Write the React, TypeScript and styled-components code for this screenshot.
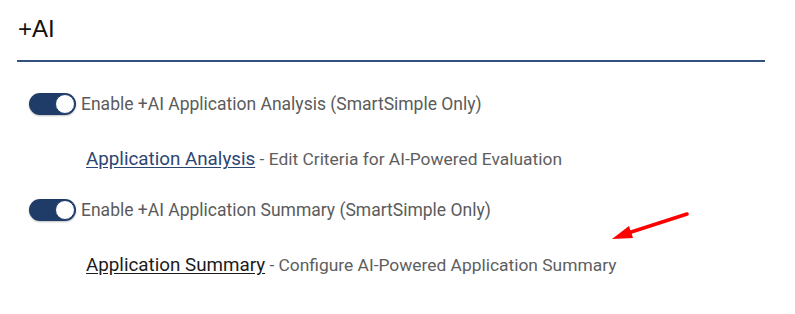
import React from "react";
import styled, { createGlobalStyle } from "styled-components";

const Global = createGlobalStyle`
  html, body { margin: 0; padding: 0; background: #fff; }
  body { font-family: Roboto, "Liberation Sans", sans-serif; }
`;

const Page = styled.div`
  position: relative;
  width: 795px;
  height: 314px;
  padding: 0 30px 0 17px;
  box-sizing: border-box;
`;

const Title = styled.h2`
  margin: 0;
  padding: 16px 0 0 1px;
  height: 62px;
  box-sizing: border-box;
  font-family: "Liberation Sans", Arial, sans-serif;
  font-weight: 400;
  font-size: 24px;
  line-height: 26px;
  color: #111;
  border-bottom: 2px solid #34507e;
`;

const Section = styled.div`
  display: flex;
  flex-direction: column;
  padding: 31px 0 0 12px;
`;

const ToggleRow = styled.label<{ $gapTop?: number }>`
  display: flex;
  align-items: center;
  gap: 5px;
  height: 22px;
  margin-top: ${(p) => p.$gapTop ?? 0}px;
`;

const Track = styled.span`
  position: relative;
  flex: none;
  display: inline-block;
  width: 47px;
  height: 22px;
  border-radius: 11px;
  background: #1f3b68;
  box-shadow: 0 1px 2px rgba(0, 0, 0, 0.25);
`;

const Knob = styled.span`
  position: absolute;
  right: 1px;
  top: 1px;
  width: 20px;
  height: 20px;
  border-radius: 50%;
  background: #fff;
  box-sizing: border-box;
  border: 1px solid #1f3b68;
`;

const ToggleText = styled.span`
  font-size: 17.5px;
  line-height: 22px;
  color: #5b5b5b;
  white-space: nowrap;
`;

const LinkRow = styled.div<{ $gapTop: number }>`
  display: flex;
  align-items: baseline;
  padding-left: 57px;
  margin-top: ${(p) => p.$gapTop}px;
  height: 22px;
  line-height: 22px;
  white-space: nowrap;
`;

const Link = styled.a<{ $visited?: boolean }>`
  font-size: 18.8px;
  color: ${(p) => (p.$visited ? "#1b1b1b" : "#2c4672")};
  text-decoration: underline;
  text-underline-offset: 2px;
  cursor: pointer;
`;

const Desc = styled.span`
  font-size: 17.4px;
  color: #5e5e5e;
  white-space: pre;
`;

const Arrow = styled.svg`
  position: absolute;
  left: 600px;
  top: 205px;
`;

export default function App() {
  return (
    <>
      <Global />
      <Page>
        <Title>+AI</Title>
        <Section>
          <ToggleRow>
            <Track>
              <Knob />
            </Track>
            <ToggleText>Enable +AI Application Analysis (SmartSimple Only)</ToggleText>
          </ToggleRow>
          <LinkRow $gapTop={33}>
            <Link>Application Analysis</Link>
            <Desc> - Edit Criteria for AI-Powered Evaluation</Desc>
          </LinkRow>
          <ToggleRow $gapTop={29}>
            <Track>
              <Knob />
            </Track>
            <ToggleText>Enable +AI Application Summary (SmartSimple Only)</ToggleText>
          </ToggleRow>
          <LinkRow $gapTop={33}>
            <Link $visited>Application Summary</Link>
            <Desc> - Configure AI-Powered Application Summary</Desc>
          </LinkRow>
        </Section>
        <Arrow width="100" height="45" viewBox="0 0 100 45">
          <line x1="87" y1="9" x2="25" y2="29" stroke="#ff0000" strokeWidth="3.5" strokeLinecap="round" />
          <polygon points="12,34 29,21 33,33" fill="#ff0000" />
        </Arrow>
      </Page>
    </>
  );
}
